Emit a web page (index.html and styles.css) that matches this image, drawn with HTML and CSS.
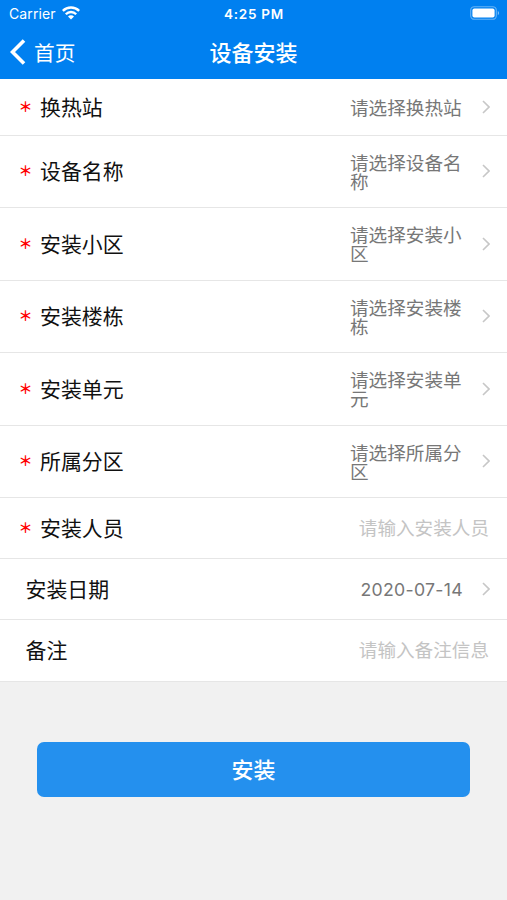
FILE: index.html
```html
<!DOCTYPE html>
<html lang="zh-CN">
	<head>
		<meta charset="utf-8" />
		<meta name="viewport" content="width=device-width, initial-scale=1" />
		<title>设备安装</title>
		<link rel="stylesheet" href="styles.css">
	</head>

	<body>
		<svg width="0" height="0" class="symbols">
			<symbol id="arrow" viewBox="0 0 8 14">
				<path d="M1 1 L7 7 L1 13" fill="none" stroke="#c7c7c7" stroke-width="1.6" />
			</symbol>
		</svg>

		<header class="header">
			<div class="status-bar">
				<div class="carrier">
					<span>Carrier</span>
					<svg class="wifi" viewBox="0 0 18 14">
						<path d="M.8 4.9 A11.5 11.5 0 0 1 17.2 4.9" fill="none" stroke="#fff" stroke-width="2.5" />
						<path d="M3.8 8.2 A7.2 7.2 0 0 1 14.2 8.2" fill="none" stroke="#fff" stroke-width="2.3" />
						<path d="M9 13.4 L6 10.6 A4.2 4.2 0 0 1 12 10.6 Z" fill="#fff" />
					</svg>
				</div>
				<div class="clock">4:25 PM</div>
				<svg class="battery" viewBox="0 0 30 14">
					<rect x="0.7" y="0.7" width="25.6" height="12.6" rx="3.6" fill="none" stroke="#fff" stroke-opacity=".4" stroke-width="1.1" />
					<rect x="2.4" y="2.4" width="22.2" height="9.2" rx="2" fill="#fff" />
					<path d="M27.8 5 A2.4 2.4 0 0 1 27.8 9.2 Z" fill="#fff" fill-opacity=".5" />
				</svg>
			</div>
			<nav class="nav-bar">
				<a class="back">
					<svg class="back-icon" viewBox="0 0 16 26">
						<path d="M14 1.5 L2.5 13 L14 24.5" fill="none" stroke="#fff" stroke-width="3.6" />
					</svg>
					<span>首页</span>
				</a>
				<h1 class="title">设备安装</h1>
			</nav>
		</header>

		<main class="form">
			<div class="row first">
				<span class="star">＊</span><span class="label">换热站</span>
				<span class="value">请选择换热站</span>
				<svg class="arrow"><use href="#arrow" /></svg>
			</div>
			<div class="row tall">
				<span class="star">＊</span><span class="label">设备名称</span>
				<span class="value">请选择设备名称</span>
				<svg class="arrow"><use href="#arrow" /></svg>
			</div>
			<div class="row tall">
				<span class="star">＊</span><span class="label">安装小区</span>
				<span class="value">请选择安装小区</span>
				<svg class="arrow"><use href="#arrow" /></svg>
			</div>
			<div class="row tall">
				<span class="star">＊</span><span class="label">安装楼栋</span>
				<span class="value">请选择安装楼栋</span>
				<svg class="arrow"><use href="#arrow" /></svg>
			</div>
			<div class="row tall">
				<span class="star">＊</span><span class="label">安装单元</span>
				<span class="value">请选择安装单元</span>
				<svg class="arrow"><use href="#arrow" /></svg>
			</div>
			<div class="row tall">
				<span class="star">＊</span><span class="label">所属分区</span>
				<span class="value">请选择所属分区</span>
				<svg class="arrow"><use href="#arrow" /></svg>
			</div>
			<div class="row">
				<span class="star">＊</span><span class="label">安装人员</span>
				<span class="placeholder">请输入安装人员</span>
			</div>
			<div class="row optional">
				<span class="label">安装日期</span>
				<span class="value date">2020-07-14</span>
				<svg class="arrow"><use href="#arrow" /></svg>
			</div>
			<div class="row optional">
				<span class="label">备注</span>
				<span class="placeholder">请输入备注信息</span>
			</div>
		</main>

		<button class="submit">安装</button>
	</body>
</html>
```

FILE: styles.css
```css
* {
	box-sizing: border-box;
}

body {
	margin: 0;
	min-height: 900px;
	background: #f1f1f1;
	font-family: "Noto Sans CJK SC", sans-serif;
	color: #111;
}

.symbols {
	display: block;
}

.header {
	height: 79px;
	background: #0080f0;
	color: #fff;
}

.status-bar {
	display: grid;
	grid-template-columns: 1fr auto 1fr;
	align-items: center;
	height: 27px;
	padding: 0 7px 0 9px;
	font-family: Inter, sans-serif;
	font-size: 13.5px;
}

.carrier {
	display: flex;
	align-items: center;
	gap: 6px;
	font-size: 14px;
	letter-spacing: .1px;
}

.wifi {
	width: 18px;
	height: 14px;
	margin-top: -1px;
}

.clock {
	margin-right: 1px;
	font-weight: 600;
	letter-spacing: .75px;
}

.battery {
	justify-self: end;
	width: 30px;
	height: 14px;
	margin-top: -1px;
}

.nav-bar {
	display: grid;
	grid-template-columns: 1fr auto 1fr;
	align-items: center;
	height: 50px;
	padding: 0 10px;
}

.back {
	display: flex;
	align-items: center;
	gap: 8px;
	font-size: 20.7px;
	line-height: 30px;
}

.back-icon {
	width: 16px;
	height: 26px;
}

.title {
	margin: 0;
	padding-bottom: 2px;
	font-size: 22px;
	font-weight: 500;
	line-height: 30px;
}

.form {
	background: #fff;
}

.row {
	display: flex;
	align-items: center;
	height: 61px;
	padding: 0 17px 0 18.5px;
	border-bottom: 1.5px solid #e6e6e6;
}

.row.first {
	height: 56.5px;
}

.row.tall {
	height: 72.5px;
}

.row.optional {
	height: 61.25px;
	padding-left: 25.5px;
}

.star {
	width: 21.5px;
	padding-bottom: 2px;
	color: #f00;
	font-size: 14px;
	font-weight: 700;
	line-height: 20px;
}

.label {
	flex: 1;
	padding-bottom: 2px;
	font-size: 20.9px;
	line-height: 28px;
}

.value {
	width: 113px;
	margin-right: 19px;
	padding-bottom: 1px;
	color: #777;
	font-size: 18.6px;
	line-height: 19px;
}

.value.date {
	width: auto;
	padding-bottom: 0;
	font-family: Inter, sans-serif;
	font-size: 17.7px;
	letter-spacing: .3px;
}

.placeholder {
	margin-right: 1px;
	padding-bottom: 2px;
	color: #c4c4c4;
	font-size: 18.6px;
	line-height: 28px;
}

.arrow {
	width: 8px;
	height: 14px;
}

.submit {
	display: block;
	width: 433px;
	height: 55px;
	margin: 60.5px auto 0;
	padding: 0 0 4px;
	border: 0;
	border-radius: 7px;
	background: #2490ee;
	color: #fff;
	font-family: inherit;
	font-size: 22px;
	font-weight: 500;
}
```
